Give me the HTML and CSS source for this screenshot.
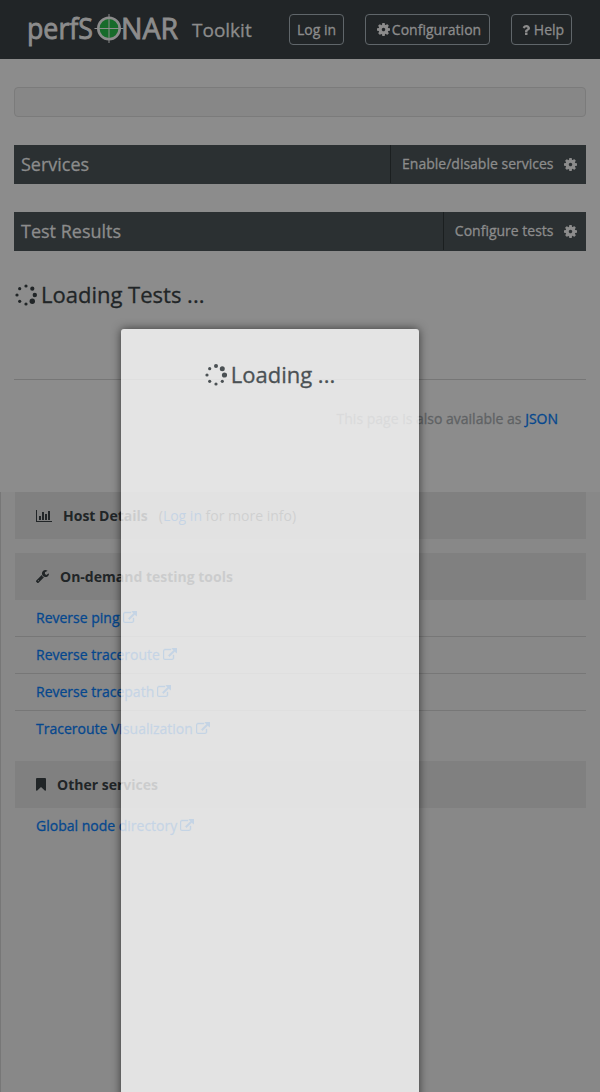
FILE: index.html
```
<!DOCTYPE html>
<html lang="en">
<head>
<meta charset="utf-8">
<title>perfSONAR Toolkit</title>
<link rel="stylesheet" href="styles.css">
</head>
<body>
<svg class="defs" width="0" height="0">
  <symbol id="cog" viewBox="128 128 1536 1536"><path d="M1100 896q0-84-60-144t-144-60-144 60-60 144 60 144 144 60 144-60 60-144zm564-109v222q0 12-8 23t-20 13l-185 28q-19 54-39 91 35 50 107 138 10 12 10 25t-9 23q-27 37-99 108t-94 71q-12 0-26-9l-138-108q-44 23-91 38-16 136-29 186-7 28-36 28h-222q-14 0-24.5-8.5t-11.5-21.5l-28-184q-49-16-90-37l-141 107q-10 9-25 9-14 0-25-11-126-114-165-168-7-10-7-23 0-12 8-23 15-21 51-66.5t54-70.5q-27-50-41-99l-183-27q-13-2-21-12.5t-8-23.5v-222q0-12 8-23t19-13l186-28q14-46 39-92-40-57-107-138-10-12-10-24 0-10 9-23 26-36 98.5-107.5t94.5-71.5q13 0 26 10l138 107q44-23 91-38 16-136 29-186 7-28 36-28h222q14 0 24.5 8.5t11.5 21.5l28 184q49 16 90 37l142-107q9-9 24-9 13 0 25 10 129 119 165 170 7 8 7 22 0 12-8 23-15 21-51 66.5t-54 70.5q26 50 41 98l183 28q13 2 21 12.5t8 23.5z"/></symbol>
  <symbol id="question" viewBox="388 256 1016 1280"><path d="M1088 1256v240q0 16-12 28t-28 12h-240q-16 0-28-12t-12-28v-240q0-16 12-28t28-12h240q16 0 28 12t12 28zm316-600q0 54-15.5 101t-35 76.5-55 59.5-57.5 43.5-61 35.5q-41 23-68.5 65t-27.5 67q0 17-12 32.5t-28 15.5h-240q-15 0-25.5-18.5t-10.5-37.5v-45q0-83 65-156.5t143-108.5q59-27 84-56t25-76q0-42-46.5-74t-107.5-32q-65 0-108 29-35 25-107 115-13 16-31 16-12 0-25-8l-164-125q-13-10-15.5-25t5.5-28q160-266 464-266 80 0 161 31t146 83 106 127.5 41 158.5z"/></symbol>
  <symbol id="external" viewBox="0 0 1792 1536"><path d="M1408 928v320q0 119-84.5 203.5t-203.5 84.5h-832q-119 0-203.5-84.5t-84.5-203.5v-832q0-119 84.500-203.500t203.500-84.500h704q14 0 23 9t9 23v64q0 14-9 23t-23 9h-704q-66 0-113 47t-47 113v832q0 66 47 113t113 47h832q66 0 113-47t47-113v-320q0-14 9-23t23-9h64q14 0 23 9t9 23zm384-864v512q0 26-19 45t-45 19-45-19l-176-176-652 652q-10 10-23 10t-23-10l-114-114q-10-10-10-23t10-23l652-652-176-176q-19-19-19-45t19-45 45-19h512q26 0 45 19t19 45z"/></symbol>
  <symbol id="wrench" viewBox="85 128 1642 1643"><path d="M448 1472q0-26-19-45t-45-19-45 19-19 45 19 45 45 19 45-19 19-45zm644-420l-682 682q-37 37-90 37-52 0-91-37l-106-108q-38-36-38-90 0-53 38-91l681-681q39 98 114.500 173.500t173.500 114.500zm634-435q0 39-23 106-47 134-164.500 217.500t-258.500 83.500q-185 0-316.500-131.500t-131.500-316.500 131.500-316.500 316.500-131.500q58 0 121.500 16.500t107.500 46.500q16 11 16 28t-16 28l-293 169v224l193 107q5-3 79-48.500t135.500-81 70.500-35.500q15 0 23.500 10t8.500 25z"/></symbol>
  <symbol id="chart" viewBox="0 0 16 12"><path d="M0 0h1v11h15v1H0zM3 6h2v4H3zM6 2h2v8H6zM9 4h2v6H9zM12 1h2v9h-2z"/></symbol>
  <symbol id="bookmark" viewBox="0 0 10 13"><path d="M1 0h8q1 0 1 1v11q0 1-1 .8L5 9 1 12.800Q0 13 0 12V1q0-1 1-1z"/></symbol>
</svg>

<header class="topbar">
  <svg class="logo" width="152" height="34" viewBox="0 0 152 34">
    <text class="logo-text" x="0" y="26.500" textLength="66" lengthAdjust="spacingAndGlyphs">perfS</text>
    <text class="logo-text" x="94" y="26.500" textLength="57" lengthAdjust="spacingAndGlyphs">NAR</text>
    <circle class="scope" cx="82" cy="16.500" r="10.700"/>
    <path class="cross" d="M82 2v29M67.500 16.500h29"/>
  </svg>
  <span class="product">Toolkit</span>
  <nav class="nav">
    <a class="btn login">Log in</a>
    <a class="btn config"><svg class="cog"><use href="#cog"/></svg>Configuration</a>
    <a class="btn help"><svg class="question"><use href="#question"/></svg>Help</a>
  </nav>
</header>

<main class="main">
  <div class="alert"></div>
  <section class="bar">
    <h2 class="bar-title">Services</h2>
    <a class="bar-action">Enable/disable services<svg class="cog"><use href="#cog"/></svg></a>
  </section>
  <section class="bar">
    <h2 class="bar-title">Test Results</h2>
    <a class="bar-action">Configure tests<svg class="cog"><use href="#cog"/></svg></a>
  </section>
  <div class="loading tests">
    <svg class="spinner" viewBox="0 0 22 22"><circle cx="11" cy="2" r="1.600"/><circle cx="17.300" cy="4.700" r="2.100"/><circle cx="19.800" cy="11" r="2.200"/><circle cx="17.300" cy="17.300" r="2.700"/><circle cx="11" cy="20" r="1.600"/><circle cx="4.700" cy="17.300" r="1.600"/><circle cx="2" cy="11" r="1.600"/><circle cx="4.700" cy="4.700" r="1.600"/></svg>
    <span class="loading-text">Loading Tests ...</span>
  </div>
  <p class="json-note">This page is also available as <a class="link">JSON</a></p>
</main>

<aside class="sidebar">
  <h3 class="side-head"><svg class="chart"><use href="#chart"/></svg>Host Details <span class="hint">(<a class="link">Log in</a> for more info)</span></h3>
  <h3 class="side-head tools"><svg class="wrench"><use href="#wrench"/></svg>On-demand testing tools</h3>
  <ul class="links">
    <li class="item"><a class="link">Reverse ping<svg class="ext"><use href="#external"/></svg></a></li>
    <li class="item"><a class="link">Reverse traceroute<svg class="ext"><use href="#external"/></svg></a></li>
    <li class="item"><a class="link">Reverse tracepath<svg class="ext"><use href="#external"/></svg></a></li>
    <li class="item"><a class="link">Traceroute Visualization<svg class="ext"><use href="#external"/></svg></a></li>
  </ul>
  <h3 class="side-head other"><svg class="bookmark"><use href="#bookmark"/></svg>Other services</h3>
  <ul class="links">
    <li class="item"><a class="link">Global node directory<svg class="ext"><use href="#external"/></svg></a></li>
  </ul>
</aside>

<div class="modal">
  <div class="loading">
    <svg class="spinner" viewBox="0 0 22 22"><circle cx="11" cy="2" r="2"/><circle cx="17.300" cy="4.700" r="2.500"/><circle cx="19.500" cy="11" r="2.600"/><circle cx="17.300" cy="17.300" r="1.600"/><circle cx="11" cy="20" r="1.600"/><circle cx="4.700" cy="17.300" r="1.600"/><circle cx="2" cy="11" r="1.600"/><circle cx="4.700" cy="4.700" r="1.600"/></svg>
    <span class="loading-text">Loading ...</span>
  </div>
</div>
</body>
</html>
```
FILE: styles.css
```
* { box-sizing: border-box; }
body {
  margin: 0;
  height: 1092px;
  display: flex;
  flex-direction: column;
  position: relative;
  overflow: hidden;
  background: #8c8c8c;
  color: #212527;
  font: 14px/20px "Open Sans", "Noto Sans", sans-serif;
  -webkit-text-stroke: 0.3px currentColor;
}
.defs { position: absolute; }
svg { fill: currentColor; flex: none; }
h2, h3, p, ul { margin: 0; padding: 0; }
.topbar {
  height: 59px;
  padding: 12px 28px 0 27px;
  display: flex;
  align-items: flex-start;
  background: #212527;
  color: #8c8c8c;
}
.logo { overflow: visible; }
.logo-text { font-size: 30px; stroke: #8c8c8c; stroke-width: 0.9px; }
.scope { fill: #176b2b; stroke: #8c8c8c; stroke-width: 2.6; }
.cross { fill: none; stroke: #8c8c8c; stroke-width: 1; }
.product { margin: 4px 0 0 13px; font-size: 19px; line-height: 28px; }
.nav { display: flex; gap: 21px; margin: 2px 0 0 auto; }
.btn {
  height: 31px;
  display: flex;
  align-items: center;
  justify-content: center;
  border: 1px solid #60666a;
  border-radius: 4px;
  white-space: nowrap;
}
.login { width: 55px; }
.config { width: 125px; gap: 2px; padding-left: 3px; }
.help { width: 61px; gap: 4px; padding-left: 3px; }
.cog { width: 13px; height: 13px; }
.question { width: 8px; height: 10px; }
.main { height: 433px; padding: 28px 14px 0; }
.alert { height: 30px; border: 1px solid #7b7b7b; border-radius: 4px; background: #878787; }
.bar {
  height: 39px;
  margin-top: 28px;
  display: flex;
  justify-content: space-between;
  background: #2b3032;
  color: #8c8c8c;
}
.bar-title { padding-left: 7px; font-size: 18px; font-weight: 400; line-height: 39px; }
.bar-action {
  height: 38px;
  padding: 0 9.5px 0 11px;
  display: flex;
  align-items: center;
  gap: 10px;
  border-left: 1px solid #1b1f20;
}
.loading { display: flex; align-items: center; gap: 4px; font-size: 22px; line-height: 30px; }
.loading-text { margin-top: -2px; }
.spinner { width: 22px; height: 22px; }
.tests { height: 129px; padding: 29px 0 69px 1px; border-bottom: 1px solid #767676; }
.json-note { padding: 29px 28px 0 0; text-align: right; color: #5f6264; }
.link { color: #05478e; }
.sidebar { flex: 1; padding: 0 14px; border-left: 1px solid #777; background: #888; }
.side-head {
  height: 47px;
  padding-left: 21px;
  display: flex;
  align-items: center;
  background: #808080;
  font-size: 14px;
  font-weight: 700;
  -webkit-text-stroke: 0;
}
.hint { margin-left: 11px; font-weight: 400; color: #303436; }
.tools { margin-top: 14px; }
.other { margin-top: 13px; }
.chart { width: 16px; height: 12px; margin-right: 11px; }
.wrench { width: 13px; height: 13px; margin-right: 11px; }
.bookmark { width: 10px; height: 13px; margin-right: 11px; }
.links { list-style: none; }
.item { height: 37px; padding: 8px 21px; border-bottom: 1px solid #777; }
.item:last-child { border-bottom: 0; }
.ext { width: 14px; height: 12px; margin-left: 3px; stroke: currentColor; stroke-width: 60px; overflow: visible; }
.modal {
  position: absolute;
  top: 329px;
  left: 121px;
  width: 298px;
  height: 780px;
  padding-top: 32px;
  border-radius: 3px;
  background: rgba(255, 255, 255, 0.77);
  box-shadow: 0 0 10px rgba(0, 0, 0, 0.6);
  color: #4b5154;
}
.modal .loading { justify-content: center; }
```
